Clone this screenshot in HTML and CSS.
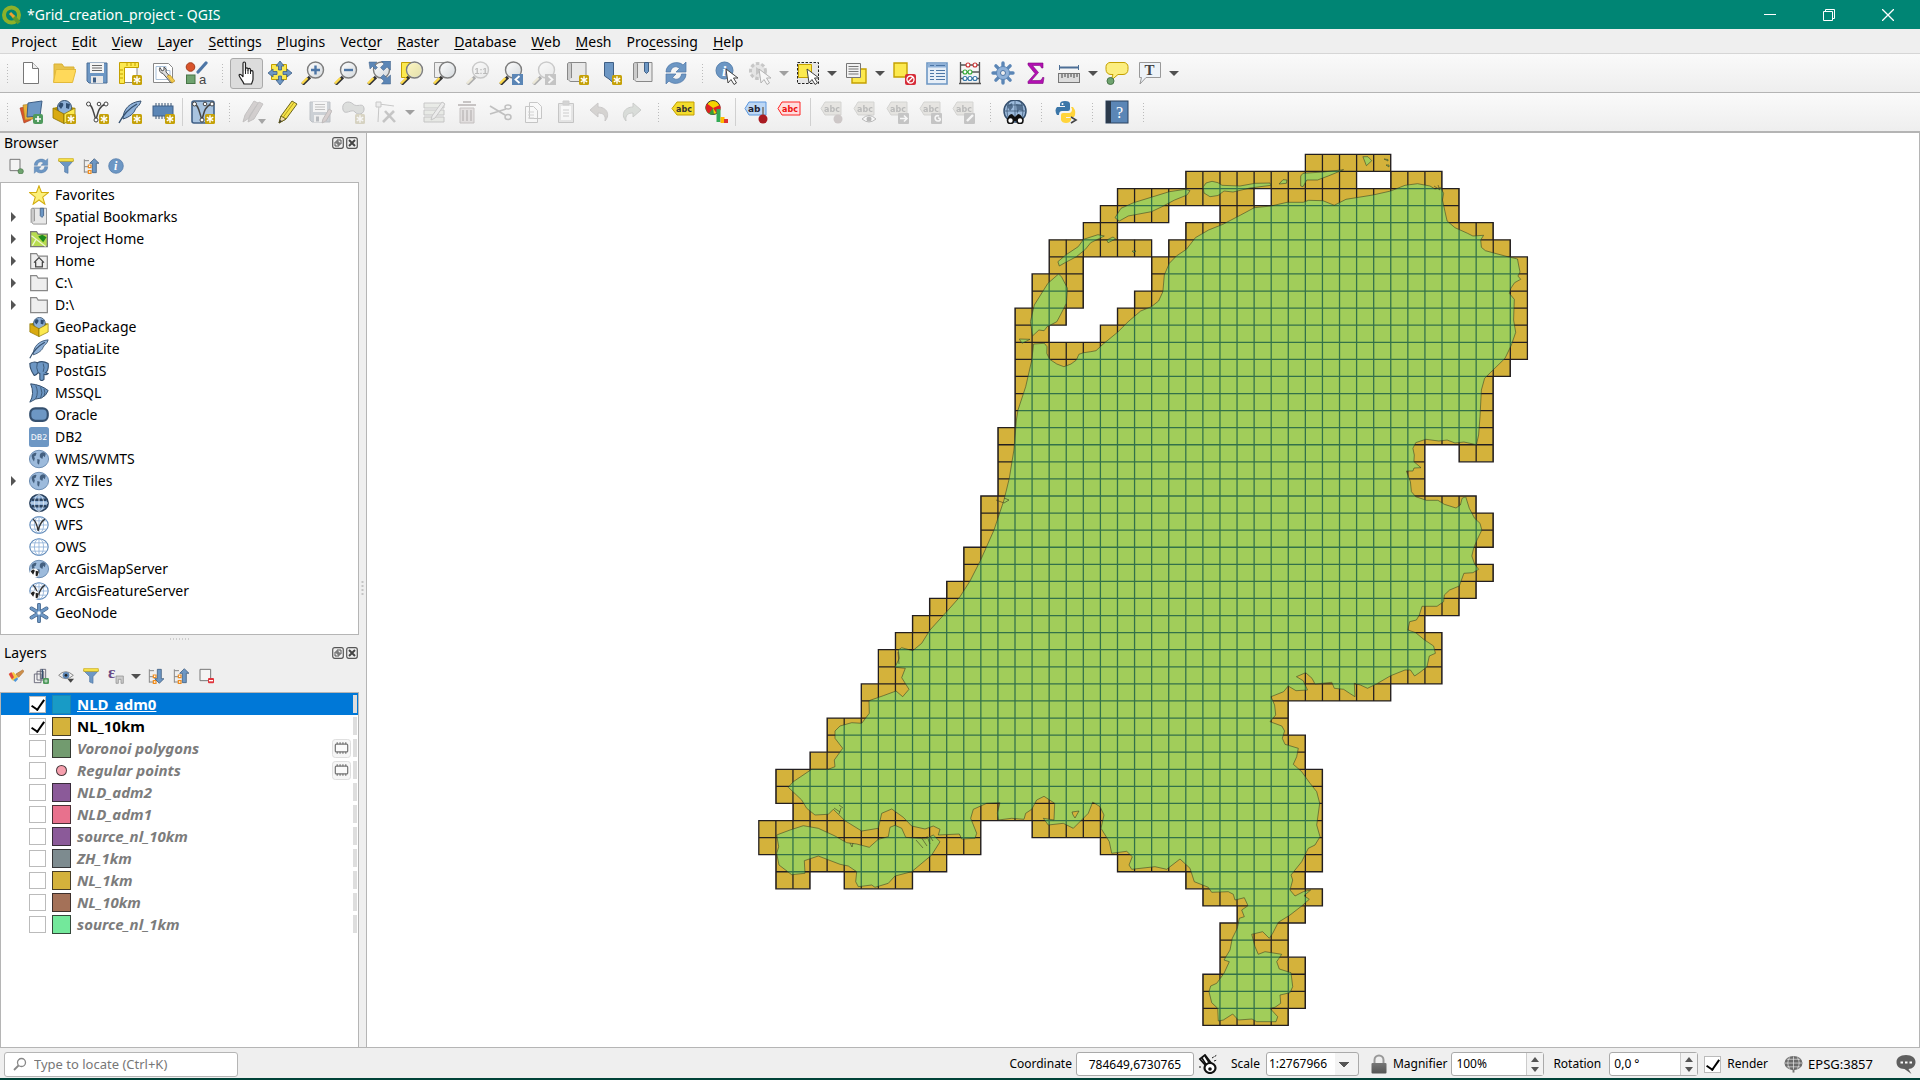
FILE: index.html
```html
<!DOCTYPE html>
<html lang="en">
<head>
<meta charset="utf-8">
<title>*Grid_creation_project - QGIS</title>
<link rel="stylesheet" href="styles.css">
</head>
<body>
<svg class="defs" aria-hidden="true">
  <defs>
    <linearGradient id="g-glass" x1="0" y1="0" x2="1" y2="1"><stop offset="0" stop-color="#fff"/><stop offset="1" stop-color="#d3d8dc"/></linearGradient>
    <linearGradient id="g-lock" x1="0" y1="0" x2="0" y2="1"><stop offset="0" stop-color="#777"/><stop offset="1" stop-color="#555"/></linearGradient>
    <symbol id="badge" viewBox="0 0 24 24"><rect x="14" y="14" width="10" height="10" rx="1.5" fill="#c5a108"/><path d="M19 15.3v7.4M15.8 17.2l6.4 3.6M22.2 17.2l-6.4 3.6" stroke="#fff" stroke-width="1.4"/></symbol>
    <symbol id="lens" viewBox="0 0 24 24"><path d="M1.500 23.500 9 16" stroke="#333" stroke-width="3.200"/><path d="M1 22.500 6.500 17" stroke="#fcd94b" stroke-width="2.400"/><circle cx="14.500" cy="9" r="8" fill="url(#g-glass)" stroke="#7d7d7d" stroke-width="1.400"/></symbol>
    <symbol id="i-new" viewBox="0 0 24 24"><path d="M4.500 1.500h9l6 6v15h-15z" fill="#fff" stroke="#777"/><path d="M13.500 1.500v6h6" fill="#eee" stroke="#777"/></symbol>
    <symbol id="i-open" viewBox="0 0 24 24"><path d="M2 21V3h8l2 3h10v4" fill="#e8c34a" stroke="#d9b032"/><path d="M1.500 21.500 4 8.500h20l-3.500 13z" fill="#ffd95a" stroke="#e2b93a"/></symbol>
    <symbol id="i-save" viewBox="0 0 24 24"><path d="M2 2h20v20H4l-2-2z" fill="#6d97c4" stroke="#4d6f96"/><rect x="5" y="2" width="14" height="10" fill="#f4f4f4"/><path d="M7 4.500h10M7 7h10M7 9.500h10" stroke="#666"/><rect x="6" y="15" width="12" height="7" fill="#e8e8e8"/><rect x="8" y="16.500" width="3" height="5" fill="#3f5f85"/></symbol>
    <symbol id="i-layout" viewBox="0 0 24 24"><path d="M5 4.500h14v17H5z" fill="#fff" stroke="#888"/><path d="M1.500 1.500h19v5h-14v16h-5z" fill="#fce94f" stroke="#c4a000"/><path d="M9 2v3M13 2v3M17 2v3M2 9h3M2 13h3M2 17h3" stroke="#c4a000"/><use href="#badge"/></symbol>
    <symbol id="i-mgr" viewBox="0 0 24 24"><path d="M2.500 2.500h15l4 4v15h-19z" fill="#fff" stroke="#888"/><path d="M5 5.500h10v4h4v9H5z" fill="none" stroke="#a9c0d8"/><path d="M9 6.500a4 4 0 0 0 3 6L20 22l3-2-8-9a4 4 0 0 0-2-5l0 3-2 1z" fill="#ddd" stroke="#555"/><path d="m16 15 5 7 3-2-5-6z" fill="#f2c94c" stroke="#b48a1c" stroke-width=".6"/></symbol>
    <symbol id="i-style" viewBox="0 0 24 24"><circle cx="6.500" cy="6" r="4.300" fill="#d9542b" stroke="#a33c1c"/><path d="m14 11 8-9" stroke="#4d76a6" stroke-width="3.200" stroke-linecap="round"/><rect x="2.500" y="14" width="8.500" height="8.500" fill="#6fa36f" stroke="#477547"/><text x="15" y="22.500" font-size="13" font-family="Liberation Sans" fill="#444">a</text></symbol>
    <symbol id="i-hand" viewBox="0 0 24 24"><path d="M9 23c-1-3-5-7-5-9 1-1.500 3 0 4 2V2.500c0-2 2.500-2 2.500 0V10 8c.3-1.500 2.300-1.500 2.500 0v2-1.500c.3-1.500 2.300-1.300 2.500 0v2c.5-1.300 2.500-1 2.500.5V18c0 2-1 3-1.500 5z" fill="#fff" stroke="#222" stroke-width="1.200"/><path d="M10.500 9v4M13 9.500V13M15.500 10v3" stroke="#222"/></symbol>
    <symbol id="i-pan" viewBox="0 0 24 24"><path d="M3.500 3.500h15v15h-15z" fill="#fce94f" stroke="#c4a000"/><path d="M12 0l4 5h-2.500v4h-3V5H8zM12 24l4-5h-2.500v-4h-3v4H8zM0 12l5-4v2.500h4v3H5V16zM24 12l-5-4v2.500h-4v3h4V16z" fill="#6d97c4" stroke="#3f5f85" stroke-width=".8"/></symbol>
    <symbol id="i-zin" viewBox="0 0 24 24"><use href="#lens"/><path d="M14.500 4.500v9M10 9h9" stroke="#4d76a6" stroke-width="2.400"/></symbol>
    <symbol id="i-zout" viewBox="0 0 24 24"><use href="#lens"/><path d="M10 9h9" stroke="#4d76a6" stroke-width="2.400"/></symbol>
    <symbol id="i-zfull" viewBox="0 0 24 24"><use href="#lens"/><path d="M2 1h8L7.500 3.500l3 3-2 2-3-3L3 8zM23.500 0h-9L17 3l-3.500 3.500 3 3L20 6l3.500 3zM23.500 23h-9l2.500-3-3.500-3.500 3-3L20 17l3.500-3z" fill="#5b86b6" stroke="#3f5f85" stroke-width=".5"/></symbol>
    <symbol id="i-zsel" viewBox="0 0 24 24"><path d="M1.500 1.500h12v15h-12z" fill="#fce94f" stroke="#c4a000"/><use href="#lens"/><circle cx="14.500" cy="9" r="7" fill="#fce94f" opacity=".35"/></symbol>
    <symbol id="i-zlay" viewBox="0 0 24 24"><path d="M1.500 1.500h12v15h-12z" fill="#eee" stroke="#999"/><use href="#lens"/></symbol>
    <symbol id="i-znat" viewBox="0 0 24 24"><use href="#lens"/><text x="8.500" y="12.500" font-size="9" font-weight="bold" font-family="Liberation Sans" fill="#555">1:1</text></symbol>
    <symbol id="i-zlast" viewBox="0 0 24 24"><use href="#lens"/><rect x="13" y="13" width="11" height="11" fill="#5b86b6"/><path d="m20.500 15-4 3.500 4 3.500" fill="none" stroke="#fff" stroke-width="1.800"/></symbol>
    <symbol id="i-znext" viewBox="0 0 24 24"><use href="#lens"/><rect x="13" y="13" width="11" height="11" fill="#777"/><path d="m16.500 15 4 3.500-4 3.500" fill="none" stroke="#fff" stroke-width="1.800"/></symbol>
    <symbol id="i-map" viewBox="0 0 24 24"><path d="M4.500 1.500H21v19H6c-3 0-3-4 0-4z" fill="#e8e8e8" stroke="#888"/><path d="M2.500 19V3c0-2 4-2 4 0v14" fill="#ccc" stroke="#888"/></symbol>
    <symbol id="i-newmap" viewBox="0 0 24 24"><use href="#i-map"/><use href="#badge"/></symbol>
    <symbol id="i-newbm" viewBox="0 0 24 24"><path d="M6.500 1.500h9V22L11 18l-4.500-3z" fill="#6d97c4" stroke="#3f5f85"/><use href="#badge"/></symbol>
    <symbol id="i-bm" viewBox="0 0 24 24"><use href="#i-map"/><path d="M13.500 1.500h4v9l-2 2-2-2z" fill="#6d97c4" stroke="#3f5f85"/></symbol>
    <symbol id="i-refresh" viewBox="0 0 24 24"><path d="M2 11C2 2 14-1 19 4l3-3v10H12l3.500-3.500C12 4 7 6 6.500 11z" fill="#6d97c4" stroke="#4d76a6" stroke-width=".7"/><path d="M22 13c0 9-12 12-17 7l-3 3V13h10l-3.500 3.500C12 20 17 18 17.500 13z" fill="#6d97c4" stroke="#4d76a6" stroke-width=".7"/></symbol>
    <symbol id="cursor" viewBox="0 0 24 24"><path d="m11 8 2 14 3-3.500 3 5 2.500-1.500-3-5H23z" fill="#fff" stroke="#444"/></symbol>
    <symbol id="i-info" viewBox="0 0 24 24"><circle cx="9.500" cy="9.500" r="8.500" fill="#6d97c4" stroke="#5580ad"/><text x="7" y="15" font-size="15" font-weight="bold" font-style="italic" font-family="Liberation Serif" fill="#fff">i</text><use href="#cursor"/></symbol>
    <symbol id="i-act" viewBox="0 0 24 24"><circle cx="10" cy="10" r="7.500" fill="#ccc" stroke="#777" stroke-width="3" stroke-dasharray="3.500 2"/><path d="m8 6 6 4-6 4z" fill="#777"/><use href="#cursor"/></symbol>
    <symbol id="i-select" viewBox="0 0 24 24"><path d="M1.500 1.500h21v21h-21z" fill="#e6e6e6" stroke="#222" stroke-dasharray="2.500 1.500"/><path d="M2.500 3.500h13v13h-13z" fill="#fce94f" stroke="#c4a000"/><use href="#cursor"/></symbol>
    <symbol id="i-form" viewBox="0 0 24 24"><path d="M8 8h14v14H8z" fill="#fce94f" stroke="#c4a000" stroke-width="1.400"/><path d="M2.500 2.500h14v14h-14z" fill="#f2f2f2" stroke="#777"/><path d="M4.500 5.500h10M4.500 8h10M4.500 10.500h10M4.500 13h10" stroke="#777"/></symbol>
    <symbol id="i-desel" viewBox="0 0 24 24"><path d="M2 2h13v14H2z" fill="#fce94f" stroke="#c4a000" stroke-width="1.400"/><rect x="13" y="13" width="11" height="11" rx="2" fill="#d62b37"/><circle cx="18.500" cy="18.500" r="3.500" fill="none" stroke="#fff" stroke-width="1.300"/><path d="m16 21 5-5" stroke="#fff" stroke-width="1.300"/></symbol>
    <symbol id="i-table" viewBox="0 0 24 24"><path d="M2 2h20v21H2z" fill="#e6eef7" stroke="#6d97c4" stroke-width="1.600"/><path d="M3 4.500h18" stroke="#8fb1d8" stroke-width="4"/><path d="M5 9.500h4M11 9.500h9M5 12.500h4M11 12.500h9M5 15.500h4M11 15.500h9M5 18.500h4M11 18.500h9M5 4.500h4M11 4.500h9" stroke="#4d76a6"/></symbol>
    <symbol id="i-abacus" viewBox="0 0 24 24"><path d="M2.500 1v22M21.500 1v22M1 22.500h22M2 4h20M2 11h20M2 17.500h20" stroke="#555" stroke-width="1.300"/><g stroke-width="1.100" fill="#fff"><g stroke="#c33"><circle cx="10" cy="4" r="2"/><circle cx="17" cy="4" r="2"/></g><g stroke="#3a3"><circle cx="7" cy="11" r="2"/><circle cx="12" cy="11" r="2"/></g><g stroke="#37a"><circle cx="7" cy="17.500" r="2"/><circle cx="12" cy="17.500" r="2"/><circle cx="17" cy="17.500" r="2"/></g></g></symbol>
    <symbol id="i-gear" viewBox="0 0 24 24"><path d="M12 2v20M2 12h20M4.900 4.900l14.200 14.200M19.100 4.900 4.900 19.100" stroke="#5b86b6" stroke-width="3.400" stroke-linecap="round"/><circle cx="12" cy="12" r="6.500" fill="#8fb1d8" stroke="#5b86b6"/><circle cx="12" cy="12" r="2.500" fill="#f0f0f0" stroke="#4d76a6"/></symbol>
    <symbol id="i-sigma" viewBox="0 0 24 24"><path d="M4 2h15v5h-1.500C17 5 16 4.500 14 4.500H8.500l6 7-7 8H15c2 0 3-1 3.500-3H20l-1 6H4v-2l7-8-7-8.500z" fill="#b30fb3" stroke="#7c0a7c" stroke-width=".6"/></symbol>
    <symbol id="i-measure" viewBox="0 0 24 24"><path d="M3 6.500h18" stroke="#4d6f96" stroke-width="2"/><path d="M2.500 4v5M21.500 4v5" stroke="#4d6f96"/><rect x="1.500" y="12.500" width="21" height="9" fill="#ddd" stroke="#777"/><path d="M5 13v4M8 13v3M11 13v4M14 13v3M17 13v4M20 13v3" stroke="#444"/></symbol>
    <symbol id="i-tip" viewBox="0 0 24 24"><path d="M5 1.500h14c2 0 4 2 4 4v3c0 3-2 5-5 5h-5l-7 6 2-6H6c-3 0-5-2-5-5v-3c0-2 2-4 4-4z" fill="#fcee7f" stroke="#c4a000"/><circle cx="5.500" cy="20" r="3.500" fill="#6fa36f" stroke="#477547"/></symbol>
    <symbol id="i-T" viewBox="0 0 24 24"><path d="M1.500 1.500h21v15H8l-6 6.500 1.500-6.500h-2z" fill="#eef3f8" stroke="#999"/><text x="6.500" y="14" font-size="15" font-weight="bold" font-family="Liberation Serif" fill="#444">T</text></symbol>
    <symbol id="i-dsm" viewBox="0 0 24 24"><path d="m1 8 8-2 3 14-7 3z" fill="#d9542b" stroke="#a33c1c" stroke-width=".6"/><path d="m4 5 9-1 1 15-8 1z" fill="#e8b13a" stroke="#a87c1c" stroke-width=".6"/><path d="m9 3 14-2-2 15-13 1z" fill="#6d97c4" stroke="#3f5f85"/><rect x="14" y="14" width="10" height="10" rx="2" fill="#4f9a5d"/><path d="M19 16v6M16 19h6" stroke="#fff" stroke-width="1.600"/></symbol>
    <symbol id="i-gpkg" viewBox="0 0 24 24"><path d="m1 8 11-3 11 3-11 6z" fill="#b39100"/><circle cx="12.500" cy="7.500" r="7" fill="#8fb1d8" stroke="#35506f"/><path d="M8 3c3-1 4 1 3 3L9 9 6.500 6zM14 3l4 1-1 5-3-1z" fill="#2f4d70"/><path d="m1 8 11 6v9.500L1 18z" fill="#d9aa10" stroke="#8a7200" stroke-width=".8"/><path d="m12 14 11-6v10l-11 5.500z" fill="#fce94f" stroke="#8a7200" stroke-width=".8"/></symbol>
    <symbol id="i-newgpkg" viewBox="0 0 24 24"><use href="#i-gpkg"/><use href="#badge"/></symbol>
    <symbol id="vee" viewBox="0 0 24 24"><path d="M4 4c4 2 4 8 7 16 2-8 3-14 10-16" fill="none" stroke="#444" stroke-width="1.500"/><g fill="#fff" stroke="#444"><circle cx="3.500" cy="4" r="2"/><circle cx="11" cy="20" r="2"/><circle cx="14" cy="4" r="1.800"/><circle cx="21" cy="4" r="2"/></g></symbol>
    <symbol id="i-shp" viewBox="0 0 24 24"><use href="#vee"/><use href="#badge"/></symbol>
    <symbol id="i-feather" viewBox="0 0 24 24"><path d="M5 19C5 9 12 2 23 1c-1 5-5 6-6 9s-5 7-12 9z" fill="#8fb1d8" stroke="#35506f"/><path d="M1 23C4 17 10 9 19 4" fill="none" stroke="#35506f" stroke-width="1.400"/></symbol>
    <symbol id="i-newsl" viewBox="0 0 24 24"><use href="#i-feather"/><use href="#badge"/></symbol>
    <symbol id="i-chip" viewBox="0 0 24 24"><path d="M5 3v16M8 3v16M11 3v16M14 3v16M17 3v16M20 3v16" stroke="#35506f"/><rect x="2" y="6" width="20" height="10" fill="#5b86b6" stroke="#3f5f85"/></symbol>
    <symbol id="i-newmem" viewBox="0 0 24 24"><use href="#i-chip"/><use href="#badge"/></symbol>
    <symbol id="i-virt" viewBox="0 0 24 24"><rect x="1" y="1" width="22" height="22" rx="2" fill="#a9c4e0" stroke="#3f5f85" stroke-width="1.600"/><use href="#vee"/><use href="#badge"/></symbol>
    <symbol id="i-pencil" viewBox="0 0 24 24"><path d="m4 23 2-7L17 1l5 3L11 19z" fill="#f5e14a" stroke="#6b6420"/><path d="m4 23 2-7 5 3z" fill="#f0dcb0" stroke="#6b6420"/><path d="m4 23 1-3 2 1z" fill="#333"/><path d="M8 17.500 19 2.500" stroke="#b5a21c"/></symbol>
    <symbol id="i-pencils" viewBox="0 0 24 24"><path d="m1 22 2-7L12 1l4 2-9 15zM6 22l2-7L17 2l4 2-9 15z" fill="#a88" stroke="#766"/><path d="M16 19h8l-4 5z" fill="#222"/></symbol>
    <symbol id="i-saveed" viewBox="0 0 24 24"><use href="#i-save"/><path d="m14 23 1-4 6-10 3 2-6 10z" fill="#c88" stroke="#755"/></symbol>
    <symbol id="i-addpoly" viewBox="0 0 24 24"><path d="M2 10C0 2 8 0 12 4s10-2 11 4-6 8-9 4-10 4-12-2z" fill="#aab8aa" stroke="#667"/><use href="#badge"/></symbol>
    <symbol id="i-vertex" viewBox="0 0 24 24"><path d="M4 22 5 4 20 6" fill="none" stroke="#777"/><path d="M2 2h5v5H2z" fill="#ddd" stroke="#777"/><path d="m9 22 11-11M11 11l10 11" stroke="#777" stroke-width="2.600"/></symbol>
    <symbol id="i-attr" viewBox="0 0 24 24"><path d="M2 3h20v5H2zM2 10h20v5H2zM2 17h20v5H2z" fill="#cdb" stroke="#777"/><path d="m9 20 1-4L20 2l3 2-10 14z" fill="#ddd" stroke="#777"/></symbol>
    <symbol id="i-trash" viewBox="0 0 24 24"><path d="M5 8h14v15H5z" fill="#d5b9b9" stroke="#866"/><path d="M3 5h18M8 2h8M8 10v11M12 10v11M16 10v11" stroke="#866" stroke-width="1.800"/></symbol>
    <symbol id="i-cut" viewBox="0 0 24 24"><path d="m2 6 15 9M2 14l16-5" stroke="#666" stroke-width="1.800"/><ellipse cx="20" cy="7" rx="3" ry="2" fill="none" stroke="#666" stroke-width="1.500"/><ellipse cx="20" cy="17" rx="3" ry="2.500" fill="none" stroke="#666" stroke-width="1.500"/></symbol>
    <symbol id="i-copy" viewBox="0 0 24 24"><path d="M8.500 2.500h8l4 4v12h-12zM4.500 6.500h8l4 4v12h-12z" fill="#fff" stroke="#777"/><path d="M7 12h6M7 15h6M7 18h6" stroke="#999"/></symbol>
    <symbol id="i-paste" viewBox="0 0 24 24"><path d="M4.500 3.500h15v19h-15z" fill="#ccc" stroke="#777"/><path d="M7 6h10v14H7z" fill="#fff"/><path d="M9 1h6v4H9zM9 10h6M9 13h6M9 16h6" stroke="#888" fill="#999"/></symbol>
    <symbol id="i-undo" viewBox="0 0 24 24"><path d="M3 10 11 3v4c8 0 13 7 7 14 1-6-2-8-7-8v4z" fill="#a98" stroke="#877"/></symbol>
    <symbol id="i-redo" viewBox="0 0 24 24"><path d="m21 10-8-7v4C5 7 0 14 6 21c-1-6 2-8 7-8v4z" fill="#9b9" stroke="#787"/></symbol>
    <symbol id="i-abc" viewBox="0 0 24 24"><path d="M1 8.500 6 2h17v13H6z" fill="#f3dc2c" stroke="#c4a000"/><text x="5" y="12" font-size="8" font-weight="bold" font-family="DejaVu Sans" fill="#333">abc</text></symbol>
    <symbol id="i-diag" viewBox="0 0 24 24"><circle cx="9" cy="7.500" r="7" fill="#f5d400" stroke="#333"/><path d="M9 8 16 5a7.500 7.500 0 0 1-3 9z" fill="#d22"/><path d="M2 5 9 8l1 6.500A7 7 0 0 1 2 5z" fill="#3a9a3a"/><path d="M3 3.500 9 8 5 13.500A7 7 0 0 1 3 3.500z" fill="#d22"/><path d="M12.500 22V9h4v13z" fill="#3a5"/><path d="M16.500 23v-6h4v6z" fill="#fb0"/><path d="M20 23v-4h4v4z" fill="#d33"/></symbol>
    <symbol id="i-lpin" viewBox="0 0 24 24"><path d="M1 8.500 5 2h17v13H5z" fill="#bcd7f5" stroke="#5b96dd"/><text x="4" y="12" font-size="9" font-weight="bold" font-family="DejaVu Sans" fill="#223">ab</text><path d="M19 7v9" stroke="#888" stroke-width="2"/><circle cx="19" cy="19" r="4.500" fill="#a91b22"/></symbol>
    <symbol id="i-lred" viewBox="0 0 24 24"><path d="M1 8.500 5 2h18v13H5z" fill="#fdd" stroke="#f22"/><text x="5" y="12" font-size="8" font-weight="bold" font-family="DejaVu Sans" fill="#e11">abc</text></symbol>
    <symbol id="lgrey" viewBox="0 0 24 24"><path d="M1 8.500 5 2h16v13H5z" fill="#cfc8a8" stroke="#998"/><text x="4" y="12" font-size="8" font-weight="bold" font-family="DejaVu Sans" fill="#555">abc</text></symbol>
    <symbol id="i-l1" viewBox="0 0 24 24"><use href="#lgrey"/><circle cx="18" cy="19" r="4.500" fill="#a77"/></symbol>
    <symbol id="i-l2" viewBox="0 0 24 24"><use href="#lgrey"/><path d="M9 19q7-7 14 0-7 6-14 0z" fill="#fff" stroke="#555"/><circle cx="16" cy="19" r="2.500" fill="#555"/></symbol>
    <symbol id="i-l3" viewBox="0 0 24 24"><use href="#lgrey"/><rect x="12" y="13" width="11" height="11" rx="1" fill="#777"/><path d="M14 18.500h7m-3-3 3 3-3 3" fill="none" stroke="#fff" stroke-width="1.600"/></symbol>
    <symbol id="i-l4" viewBox="0 0 24 24"><use href="#lgrey"/><rect x="12" y="13" width="11" height="11" rx="1" fill="#777"/><path d="M20 16c-5-2-5 5-1 5 3 0 3-3 0-3" fill="none" stroke="#fff" stroke-width="1.600"/></symbol>
    <symbol id="i-l5" viewBox="0 0 24 24"><use href="#lgrey"/><rect x="12" y="13" width="11" height="11" rx="1" fill="#777"/><path d="m15 21 6-6" stroke="#fff" stroke-width="2.400"/></symbol>
    <symbol id="i-globe" viewBox="0 0 24 24"><ellipse cx="12" cy="12" rx="11.500" ry="10.500" fill="#9dbbdc" stroke="#5b7fa8"/><path d="M3 8c2-3 4-4 6-3l-1 3-2 1 1 2-1 4-2-3zM10 12l3 1-1 6-2-2zM14 5c3-2 5-1 6 1l-1 4-2-2-1 4-3-2 0-3z" fill="#35506f" opacity=".85"/></symbol>
    <symbol id="i-meta" viewBox="0 0 24 24"><circle cx="12" cy="11" r="11" fill="#9dbbdc" stroke="#35506f" stroke-width="1.500"/><path d="M4 6l5-3 1 4-3 4zM13 4l6 1 1 6-4-1-2 4z" fill="#35506f" opacity=".7"/><path d="M2 11h20M4 5h16M12 0v22M6 2q-4 9 0 18M18 2q4 9 0 18" fill="none" stroke="#35506f" stroke-width=".7"/><path d="M4 21q1-7 5-7l3 3 3-3q4 0 5 7" fill="#111"/><circle cx="7.500" cy="20.500" r="3" fill="#fff" stroke="#111" stroke-width="1.600"/><circle cx="17" cy="20.500" r="3" fill="#fff" stroke="#111" stroke-width="1.600"/></symbol>
    <symbol id="i-py" viewBox="0 0 24 24"><path d="M6 6V4q0-3 5-3t5 3v5q0 2-2 2H8q-3 0-3 4H3q-3-5 0-8h8V6z" fill="#3b76a8"/><path d="M17 7h2q4 5 1 10h-8v1h5v2q-1 3-5 3t-5-3v-5q0-2 2-2h6q3 0 3-4z" fill="#ffd43b"/><circle cx="8.500" cy="4" r="1" fill="#fff"/><path d="m17 17 5 3-5 3" fill="none" stroke="#444" stroke-width="1.600"/></symbol>
    <symbol id="i-help" viewBox="0 0 24 24"><rect x="1" y="1" width="22" height="22" fill="#5b86b6" stroke="#2b4360"/><rect x="1" y="1" width="5" height="22" fill="#2b3a4c"/><text x="11" y="18" font-size="16" font-family="Liberation Serif" fill="#fff">?</text></symbol>
    <symbol id="i-star" viewBox="0 0 24 24"><path d="m12 1 3 8h8.500l-7 5.500 2.500 8.500-7-5-7 5 2.500-8.500-7-5.500H9z" fill="#fcf07a" stroke="#d3ad10" stroke-width="1.300"/></symbol>
    <symbol id="i-folder" viewBox="0 0 24 24"><path d="M2 21V3h7l2 3h11v15z" fill="#eee" stroke="#888" stroke-width="1.500"/></symbol>
    <symbol id="i-phome" viewBox="0 0 24 24"><path d="M2 21V3h7l2 3h11v15z" fill="#b8dc50" stroke="#777" stroke-width="1.500"/><path d="m3 8 17 13M8 13l-4 7" stroke="#eef6cc" stroke-width="1.500"/><path d="m11 9 5-2 5 3-4 6z" fill="#1d8a1d"/></symbol>
    <symbol id="i-home" viewBox="0 0 24 24"><use href="#i-folder"/><path d="m6 14 6-6 6 6M8 13v6h8v-6" fill="none" stroke="#444" stroke-width="1.500"/></symbol>
    <symbol id="i-pg" viewBox="0 0 24 24"><path d="M1 3q5-3 9-1 6-3 13 1 1 8-3 11l3 1q-2 2-5 1v6q-3 3-5 0v-7l-2-1q-3 4-5 3Q1 10 1 3z" fill="#6d97c4" stroke="#35506f" stroke-width="1.300"/><path d="M10 2q-2 6 1 12M17 3q2 5 0 10" fill="none" stroke="#35506f"/></symbol>
    <symbol id="i-ms" viewBox="0 0 24 24"><path d="M2 1q12 1 21 8-2 6-8 9Q8 18 1 23q6-10 1-22z" fill="#6d97c4" stroke="#35506f" stroke-width="1.200"/><path d="M8 3q4 8 0 16M14 5q3 7 0 13M18 7q2 4 0 9" fill="none" stroke="#35506f"/></symbol>
    <symbol id="i-ora" viewBox="0 0 24 24"><rect x="1.500" y="4" width="21" height="15" rx="6" fill="#6d97c4" stroke="#35506f" stroke-width="2.600"/></symbol>
    <symbol id="i-db2" viewBox="0 0 24 24"><rect width="24" height="24" rx="3" fill="#6d97c4"/><text x="2" y="15" font-size="9.500" font-family="DejaVu Sans" fill="#fff">DB2</text></symbol>
    <symbol id="i-wcs" viewBox="0 0 24 24"><ellipse cx="12" cy="12" rx="11" ry="10" fill="#8fb1d8" stroke="#2b4360" stroke-width="2"/><path d="M3 8h18M3 16h18" stroke="#2b4360" stroke-width="3"/><path d="M12 2v20M1 12h22" stroke="#dbe7f3"/><ellipse cx="12" cy="12" rx="5.500" ry="10" fill="none" stroke="#dbe7f3"/></symbol>
    <symbol id="i-ows" viewBox="0 0 24 24"><ellipse cx="12" cy="12" rx="11" ry="10" fill="#fff" stroke="#5b86b6" stroke-width="1.300"/><path d="M3 7h18M3 17h18M12 2v20M1 12h22" stroke="#8fb1d8"/><ellipse cx="12" cy="12" rx="5.500" ry="10" fill="none" stroke="#8fb1d8"/></symbol>
    <symbol id="i-wfs" viewBox="0 0 24 24"><use href="#i-ows"/><path d="M5 5q4 3 6 14 2-10 8-14" fill="none" stroke="#333" stroke-width="1.600"/></symbol>
    <symbol id="i-ams" viewBox="0 0 24 24"><use href="#i-globe"/><circle cx="6.500" cy="17" r="5.500" fill="#fff"/><path d="M2 15q3-4 5-1l-2 5zM8 14l4 1-2 6-2-1z" fill="#222"/></symbol>
    <symbol id="i-afs" viewBox="0 0 24 24"><use href="#i-wfs"/><circle cx="6.500" cy="17" r="5.500" fill="#fff"/><path d="M2 15q3-4 5-1l-2 5zM8 14l4 1-2 6-2-1z" fill="#222"/></symbol>
    <symbol id="i-node" viewBox="0 0 24 24"><path d="M12 2v20M3 6.500l18 11M21 6.500l-18 11" stroke="#3f5f85" stroke-width="4.600" stroke-linecap="round"/><path d="M12 2v20M3 6.500l18 11M21 6.500l-18 11" stroke="#6d97c4" stroke-width="3" stroke-linecap="round"/><circle cx="12" cy="12" r="2" fill="#fff"/></symbol>
    <symbol id="i-addl" viewBox="0 0 24 24"><path d="M3 2h15v17H3z" fill="#f4f4f4" stroke="#777" stroke-width="1.500"/><circle cx="19" cy="20" r="4" fill="#6fa36f" stroke="#477547"/></symbol>
    <symbol id="i-filter" viewBox="0 0 24 24"><path d="M1 4h22l-8 9v10l-5-2v-8z" fill="#6d97c4" stroke="#4d76a6"/><path d="M1 1h22v4H1z" fill="#fce94f" stroke="#c4a000"/></symbol>
    <symbol id="tree" viewBox="0 0 24 24"><path d="M2 2v20M2 4h7M2 13h7M2 21h7" stroke="#888" stroke-width="1.500"/><path d="M8 10.500h4v4H8zM8 19h4v4H8z" fill="#fff" stroke="#f08c1c" stroke-width="1.800"/></symbol>
    <symbol id="i-up" viewBox="0 0 24 24"><use href="#tree"/><path d="m17 1 7 7h-4v14h-6V8h-4z" fill="#6d97c4" stroke="#2f4d70"/></symbol>
    <symbol id="i-down" viewBox="0 0 24 24"><use href="#tree"/><path d="m17 23 7-7h-4V2h-6v14h-4z" fill="#6d97c4" stroke="#2f4d70"/></symbol>
    <symbol id="i-prop" viewBox="0 0 24 24"><circle cx="12" cy="12" r="11" fill="#6d97c4" stroke="#4d76a6"/><text x="9" y="18" font-size="18" font-weight="bold" font-style="italic" font-family="Liberation Serif" fill="#fff">i</text></symbol>
    <symbol id="i-brush" viewBox="0 0 24 24"><path d="m2 10 6-4 7 7-5 6q-6 0-8-9z" fill="#f6c945"/><path d="m1 9 4-3 4 8-3 3z" fill="#e2463f"/><path d="m8 18 6-4 1 3-4 4z" fill="#4d96dd"/><path d="m12 9 4 5 8-9-2-2z" fill="#cf8f4a" stroke="#a86d2c"/></symbol>
    <symbol id="i-group" viewBox="0 0 24 24"><path d="M2 9h10v13H2zM6 5h10v13H6zM11 2h8v14h-8z" fill="#f0f0f0" stroke="#667" stroke-width="1.400"/><path d="M14 2v14" stroke="#35506f" stroke-width="2"/><rect x="15" y="15" width="9" height="9" rx="2" fill="#4f9a5d"/><path d="M19.500 17v5M17 19.500h5" stroke="#fff"/></symbol>
    <symbol id="i-eye" viewBox="0 0 24 24"><path d="M1 11q10-11 22 0-11 10-22 0z" fill="#eee" stroke="#888" stroke-width="1.500"/><circle cx="12" cy="11" r="5" fill="#5b86b6"/><circle cx="12" cy="11" r="2" fill="#222"/><path d="M14 16h10l-5 6z" fill="#444"/></symbol>
    <symbol id="i-eps" viewBox="0 0 24 24"><text x="0" y="15" font-size="26" font-weight="bold" font-family="Liberation Serif" fill="#6a4c86">ε</text><path d="M12 12h11v11h-3.500v-6h-4v6H12z" fill="#ccc" stroke="#888"/></symbol>
    <symbol id="i-reml" viewBox="0 0 24 24"><path d="M3 2h16v17H3z" fill="#f4f4f4" stroke="#777" stroke-width="1.500"/><rect x="15" y="15" width="9" height="8" rx="1.500" fill="#e0343c"/><path d="M16.500 19h6" stroke="#fff" stroke-width="2"/></symbol>
    <symbol id="i-float" viewBox="0 0 12 12"><rect x=".7" y=".7" width="10.600" height="10.600" rx="2" fill="none" stroke="#555" stroke-width="1.200"/><path d="M5 3h4v4H5zM3 5h4v4H3z" fill="#efefef" stroke="#555"/></symbol>
    <symbol id="i-close" viewBox="0 0 12 12"><rect x=".7" y=".7" width="10.600" height="10.600" rx="2" fill="none" stroke="#555" stroke-width="1.200"/><path d="m3 3 6 6M9 3 3 9" stroke="#444" stroke-width="2"/></symbol>
    <symbol id="i-mem" viewBox="0 0 20 20"><rect x=".5" y=".5" width="19" height="19" rx="3" fill="#f6f6f6" stroke="#dcdcdc"/><path d="M5.500 3.500v12M8.500 3.500v12M11.500 3.500v12M14.500 3.500v12" stroke="#777" stroke-width="1.300"/><rect x="3.500" y="5.500" width="13" height="8" rx="1" fill="#fafafa" stroke="#777" stroke-width="1.300"/></symbol>
  </defs>
</svg>
<div class="app">
  <header class="titlebar">
    <svg class="logo" viewBox="0 0 20 20"><circle cx="9.500" cy="10" r="7.500" fill="none" stroke="#8db12a" stroke-width="4"/><path d="m11 11 6 7" stroke="#5f9a2c" stroke-width="4"/><path d="m8 8 4 4" stroke="#f0a030" stroke-width="3"/></svg>
    <h1 class="title">*Grid_creation_project - QGIS</h1>
    <button class="win" aria-label="Minimize"><svg viewBox="0 0 12 12"><path d="M0 5.500h12" stroke="#fff"/></svg></button>
    <button class="win" aria-label="Restore"><svg viewBox="0 0 12 12"><path d="M.5 2.500h9v9h-9zM2.500 2.500v-2h9v9h-2" fill="none" stroke="#fff"/></svg></button>
    <button class="win" aria-label="Close"><svg viewBox="0 0 12 12"><path d="m0 0 12 12M12 0 0 12" stroke="#fff" stroke-width="1.300"/></svg></button>
  </header>
  <nav class="menubar">
    <button>Pro<u>j</u>ect</button><button><u>E</u>dit</button><button><u>V</u>iew</button><button><u>L</u>ayer</button><button><u>S</u>ettings</button><button><u>P</u>lugins</button><button>Vect<u>o</u>r</button><button><u>R</u>aster</button><button><u>D</u>atabase</button><button><u>W</u>eb</button><button><u>M</u>esh</button><button>Pro<u>c</u>essing</button><button><u>H</u>elp</button>
  </nav>
  <div class="toolbar" role="toolbar" aria-label="Project and navigation">
    <i class="handle"></i>
    <button class="tool" aria-label="New"><svg><use href="#i-new"/></svg></button>
    <button class="tool" aria-label="Open"><svg><use href="#i-open"/></svg></button>
    <button class="tool" aria-label="Save"><svg><use href="#i-save"/></svg></button>
    <button class="tool" aria-label="New layout"><svg><use href="#i-layout"/></svg></button>
    <button class="tool" aria-label="Layout manager"><svg><use href="#i-mgr"/></svg></button>
    <button class="tool" aria-label="Style manager"><svg><use href="#i-style"/></svg></button>
    <i class="handle"></i>
    <button class="tool active" aria-label="Pan"><svg><use href="#i-hand"/></svg></button>
    <button class="tool" aria-label="Pan to selection"><svg><use href="#i-pan"/></svg></button>
    <button class="tool" aria-label="Zoom in"><svg><use href="#i-zin"/></svg></button>
    <button class="tool" aria-label="Zoom out"><svg><use href="#i-zout"/></svg></button>
    <button class="tool" aria-label="Zoom full"><svg><use href="#i-zfull"/></svg></button>
    <button class="tool" aria-label="Zoom to selection"><svg><use href="#i-zsel"/></svg></button>
    <button class="tool" aria-label="Zoom to layer"><svg><use href="#i-zlay"/></svg></button>
    <button class="tool" disabled aria-label="Native resolution"><svg><use href="#i-znat"/></svg></button>
    <button class="tool" aria-label="Zoom last"><svg><use href="#i-zlast"/></svg></button>
    <button class="tool" disabled aria-label="Zoom next"><svg><use href="#i-znext"/></svg></button>
    <button class="tool" aria-label="New map view"><svg><use href="#i-newmap"/></svg></button>
    <button class="tool" aria-label="New bookmark"><svg><use href="#i-newbm"/></svg></button>
    <button class="tool" aria-label="Bookmarks"><svg><use href="#i-bm"/></svg></button>
    <button class="tool" aria-label="Refresh"><svg><use href="#i-refresh"/></svg></button>
    <i class="handle"></i>
    <button class="tool" aria-label="Identify"><svg><use href="#i-info"/></svg></button>
    <button class="tool" disabled aria-label="Action"><svg><use href="#i-act"/></svg></button>
    <button class="drop" disabled aria-label="Actions menu"></button>
    <button class="tool" aria-label="Select"><svg><use href="#i-select"/></svg></button>
    <button class="drop" aria-label="Select menu"></button>
    <button class="tool" aria-label="Select by value"><svg><use href="#i-form"/></svg></button>
    <button class="drop" aria-label="Select by value menu"></button>
    <button class="tool" aria-label="Deselect"><svg><use href="#i-desel"/></svg></button>
    <button class="tool" aria-label="Attribute table"><svg><use href="#i-table"/></svg></button>
    <button class="tool" aria-label="Field calculator"><svg><use href="#i-abacus"/></svg></button>
    <button class="tool" aria-label="Processing toolbox"><svg><use href="#i-gear"/></svg></button>
    <button class="tool" aria-label="Statistics"><svg><use href="#i-sigma"/></svg></button>
    <button class="tool" aria-label="Measure"><svg><use href="#i-measure"/></svg></button>
    <button class="drop" aria-label="Measure menu"></button>
    <button class="tool" aria-label="Map tips"><svg><use href="#i-tip"/></svg></button>
    <button class="tool" aria-label="Text annotation"><svg><use href="#i-T"/></svg></button>
    <button class="drop" aria-label="Annotation menu"></button>
  </div>
  <div class="toolbar last" role="toolbar" aria-label="Layers and editing">
    <i class="handle"></i>
    <button class="tool" aria-label="Data source manager"><svg><use href="#i-dsm"/></svg></button>
    <button class="tool" aria-label="New GeoPackage"><svg><use href="#i-newgpkg"/></svg></button>
    <button class="tool" aria-label="New shapefile"><svg><use href="#i-shp"/></svg></button>
    <button class="tool" aria-label="New SpatiaLite"><svg><use href="#i-newsl"/></svg></button>
    <button class="tool" aria-label="New temporary layer"><svg><use href="#i-newmem"/></svg></button>
    <i class="sep"></i>
    <button class="tool" aria-label="New virtual layer"><svg><use href="#i-virt"/></svg></button>
    <i class="handle"></i>
    <button class="tool" disabled aria-label="Current edits"><svg><use href="#i-pencils"/></svg></button>
    <button class="tool" aria-label="Toggle editing"><svg><use href="#i-pencil"/></svg></button>
    <button class="tool" disabled aria-label="Save edits"><svg><use href="#i-saveed"/></svg></button>
    <button class="tool" disabled aria-label="Add polygon"><svg><use href="#i-addpoly"/></svg></button>
    <button class="tool" disabled aria-label="Vertex tool"><svg><use href="#i-vertex"/></svg></button>
    <button class="drop" disabled aria-label="Vertex menu"></button>
    <button class="tool" disabled aria-label="Modify attributes"><svg><use href="#i-attr"/></svg></button>
    <button class="tool" disabled aria-label="Delete selected"><svg><use href="#i-trash"/></svg></button>
    <button class="tool" disabled aria-label="Cut"><svg><use href="#i-cut"/></svg></button>
    <button class="tool" disabled aria-label="Copy"><svg><use href="#i-copy"/></svg></button>
    <button class="tool" disabled aria-label="Paste"><svg><use href="#i-paste"/></svg></button>
    <button class="tool" disabled aria-label="Undo"><svg><use href="#i-undo"/></svg></button>
    <button class="tool" disabled aria-label="Redo"><svg><use href="#i-redo"/></svg></button>
    <i class="handle"></i>
    <button class="tool" aria-label="Labels"><svg><use href="#i-abc"/></svg></button>
    <button class="tool" aria-label="Diagrams"><svg><use href="#i-diag"/></svg></button>
    <i class="sep"></i>
    <button class="tool" aria-label="Pinned labels"><svg><use href="#i-lpin"/></svg></button>
    <button class="tool" aria-label="Unplaced labels"><svg><use href="#i-lred"/></svg></button>
    <i class="sep wide"></i>
    <button class="tool" disabled aria-label="Pin label"><svg><use href="#i-l1"/></svg></button>
    <button class="tool" disabled aria-label="Show label"><svg><use href="#i-l2"/></svg></button>
    <button class="tool" disabled aria-label="Move label"><svg><use href="#i-l3"/></svg></button>
    <button class="tool" disabled aria-label="Rotate label"><svg><use href="#i-l4"/></svg></button>
    <button class="tool" disabled aria-label="Change label"><svg><use href="#i-l5"/></svg></button>
    <i class="handle"></i>
    <button class="tool" aria-label="MetaSearch"><svg><use href="#i-meta"/></svg></button>
    <i class="handle"></i>
    <button class="tool" aria-label="Python console"><svg><use href="#i-py"/></svg></button>
    <i class="handle"></i>
    <button class="tool" aria-label="Help"><svg><use href="#i-help"/></svg></button>
    <i class="handle"></i>
  </div>
  <main class="work">
    <aside class="docks">
      <section class="dock browser">
        <div class="dock-head"><h2>Browser</h2><button aria-label="Float Browser"><svg><use href="#i-float"/></svg></button><button aria-label="Close Browser"><svg><use href="#i-close"/></svg></button></div>
        <div class="dock-tools">
          <button aria-label="Add layer"><svg><use href="#i-addl"/></svg></button><button aria-label="Refresh"><svg><use href="#i-refresh"/></svg></button><button aria-label="Filter"><svg><use href="#i-filter"/></svg></button><button aria-label="Collapse all"><svg><use href="#i-up"/></svg></button><button aria-label="Properties"><svg><use href="#i-prop"/></svg></button>
        </div>
        <ul class="tree">
          <li><svg><use href="#i-star"/></svg>Favorites</li>
          <li class="parent"><svg><use href="#i-bm"/></svg>Spatial Bookmarks</li>
          <li class="parent"><svg><use href="#i-phome"/></svg>Project Home</li>
          <li class="parent"><svg><use href="#i-home"/></svg>Home</li>
          <li class="parent"><svg><use href="#i-folder"/></svg>C:\</li>
          <li class="parent"><svg><use href="#i-folder"/></svg>D:\</li>
          <li><svg><use href="#i-gpkg"/></svg>GeoPackage</li>
          <li><svg><use href="#i-feather"/></svg>SpatiaLite</li>
          <li><svg><use href="#i-pg"/></svg>PostGIS</li>
          <li><svg><use href="#i-ms"/></svg>MSSQL</li>
          <li><svg><use href="#i-ora"/></svg>Oracle</li>
          <li><svg><use href="#i-db2"/></svg>DB2</li>
          <li><svg><use href="#i-globe"/></svg>WMS/WMTS</li>
          <li class="parent"><svg><use href="#i-globe"/></svg>XYZ Tiles</li>
          <li><svg><use href="#i-wcs"/></svg>WCS</li>
          <li><svg><use href="#i-wfs"/></svg>WFS</li>
          <li><svg><use href="#i-ows"/></svg>OWS</li>
          <li><svg><use href="#i-ams"/></svg>ArcGisMapServer</li>
          <li><svg><use href="#i-afs"/></svg>ArcGisFeatureServer</li>
          <li><svg><use href="#i-node"/></svg>GeoNode</li>
        </ul>
      </section>
      <div class="grip-h"></div>
      <section class="dock layers">
        <div class="dock-head"><h2>Layers</h2><button aria-label="Float Layers"><svg><use href="#i-float"/></svg></button><button aria-label="Close Layers"><svg><use href="#i-close"/></svg></button></div>
        <div class="dock-tools">
          <button aria-label="Styling panel"><svg><use href="#i-brush"/></svg></button><button aria-label="Add group"><svg><use href="#i-group"/></svg></button><button aria-label="Map themes"><svg><use href="#i-eye"/></svg></button><button aria-label="Filter legend"><svg><use href="#i-filter"/></svg></button><button aria-label="Filter by expression"><svg><use href="#i-eps"/></svg></button><button class="drop" aria-label="Expression menu"></button><button aria-label="Expand all"><svg><use href="#i-down"/></svg></button><button aria-label="Collapse all"><svg><use href="#i-up"/></svg></button><button aria-label="Remove layer"><svg><use href="#i-reml"/></svg></button>
        </div>
        <ul class="legend">
          <li class="selected"><label><input type="checkbox" checked><span class="sw c-blue"></span><span>NLD_adm0</span></label><i class="bar"></i></li>
          <li class="on"><label><input type="checkbox" checked><span class="sw c-gold"></span><span>NL_10km</span></label><i class="bar"></i></li>
          <li><label><input type="checkbox"><span class="sw c-green"></span><span>Voronoi polygons</span></label><svg><use href="#i-mem"/></svg><i class="bar"></i></li>
          <li><label><input type="checkbox"><span class="sw dot"></span><span>Regular points</span></label><svg><use href="#i-mem"/></svg><i class="bar"></i></li>
          <li><label><input type="checkbox"><span class="sw c-purple"></span><span>NLD_adm2</span></label><i class="bar"></i></li>
          <li><label><input type="checkbox"><span class="sw c-pink"></span><span>NLD_adm1</span></label><i class="bar"></i></li>
          <li><label><input type="checkbox"><span class="sw c-purple"></span><span>source_nl_10km</span></label><i class="bar"></i></li>
          <li><label><input type="checkbox"><span class="sw c-slate"></span><span>ZH_1km</span></label><i class="bar"></i></li>
          <li><label><input type="checkbox"><span class="sw c-gold"></span><span>NL_1km</span></label><i class="bar"></i></li>
          <li><label><input type="checkbox"><span class="sw c-brown"></span><span>NL_10km</span></label><i class="bar"></i></li>
          <li><label><input type="checkbox"><span class="sw c-mint"></span><span>source_nl_1km</span></label><i class="bar"></i></li>
        </ul>
      </section>
    </aside>
    <div class="grip-v"></div>
    <section class="canvas" aria-label="Map canvas">
      <svg viewBox="367 133 1552 914">
        <defs>
          <path id="cells" d="M32 0h5v1h-5zM25 1h10v1H25zM37 1h3v1h-3zM21 2h8v1h-8zM30 2h11v1H30zM20 3h4v1h-4zM27 3h14v1H27zM19 4h2v1h-2zM25 4h18v1H25zM17 5h6v1h-6zM24 5h20v1H24zM17 6h2v1h-2zM23 6h22v1H23zM16 7h3v1h-3zM23 7h22v1H23zM16 8h3v1h-3zM22 8h23v1H22zM15 9h3v1h-3zM21 9h24v1H21zM15 10h2v1h-2zM20 10h25v1H20zM15 11h30v1H15zM15 12h29v1H15zM15 13h28v1H15zM15 14h28v1H15zM15 15h28v1H15zM14 16h29v1H14zM14 17h25v1H14zM41 17h2v1h-2zM14 18h25v1H14zM14 19h25v1H14zM13 20h29v1H13zM13 21h30v1H13zM13 22h30v1H13zM12 23h30v1H12zM12 24h31v1H12zM11 25h31v1H11zM10 26h31v1H10zM9 27h30v1H9zM8 28h32v1H8zM7 29h33v1H7zM7 30h33v1H7zM6 31h31v1H6zM6 32h25v1H6zM4 33h27v1H4zM4 34h28v1H4zM3 35h29v1H3zM1 36h32v1H1zM1 37h32v1H1zM2 38h31v1H2zM0 39h13v1H0zM16 39h17v1H16zM0 40h13v1H0zM20 40h13v1H20zM1 41h10v1H1zM21 41h12v1H21zM1 42h2v1H1zM5 42h4v1H5zM25 42h7v1h-7zM26 43h7v1h-7zM28 44h4v1h-4zM27 45h4v1h-4zM27 46h4v1h-4zM27 47h5v1h-5zM26 48h6v1h-6zM26 49h6v1h-6zM26 50h5v1h-5z"/>
          <clipPath id="cell-clip"><use href="#cells"/></clipPath>
        </defs>
        <g transform="translate(758.800 154.400) scale(17.080)">
          <use href="#cells" class="cell"/>
          <path class="meridian" clip-path="url(#cell-clip)" d="M1 0v51M2 0v51M3 0v51M4 0v51M5 0v51M6 0v51M7 0v51M8 0v51M9 0v51M10 0v51M11 0v51M12 0v51M13 0v51M14 0v51M15 0v51M16 0v51M17 0v51M18 0v51M19 0v51M20 0v51M21 0v51M22 0v51M23 0v51M24 0v51M25 0v51M26 0v51M27 0v51M28 0v51M29 0v51M30 0v51M31 0v51M32 0v51M33 0v51M34 0v51M35 0v51M36 0v51M37 0v51M38 0v51M39 0v51M40 0v51M41 0v51M42 0v51M43 0v51M44 0v51"/>
        </g>
        <path class="land" fill-rule="evenodd" d="M1033.600 344 1044.300 343.300 1047 346.700 1046.800 353.300 1049.600 359.300 1056.800 364 1063.900 366.700 1071 364 1076.400 360 1078.900 354.300 1083.600 352.700 1090.700 351.700 1096 350.700 1103.200 344 1117.500 332.300 1128.200 321.700 1140.700 311 1151.400 306.700 1158.600 301 1162.900 291.700 1164.300 275 1169.300 263.300 1176.400 256 1186.400 249.300 1195.400 237.700 1208.600 230 1222.900 224.300 1240.700 215 1254.300 207.700 1271 206 1287.100 202.300 1303.200 202.300 1308.600 200.300 1322.900 200.700 1334.300 205.300 1346 199.300 1372.900 195 1390.700 191 1405 185.300 1417.500 183.700 1430 186 1435 189 1440.700 187.700 1443.600 193.300 1442.500 200 1445 211.700 1447.100 221 1455 227.700 1467.500 233.300 1472.900 236 1483.600 235.300 1480.700 240 1481.400 247.300 1485.400 250.700 1505 256 1517.500 259 1518.600 265 1520 272 1517.900 276 1520.700 279.300 1514.600 282.700 1511 288 1509.300 293.300 1514.300 299.300 1513.600 320 1515.700 332.300 1511.400 345 1505 358.300 1490.700 372.300 1484.600 378.300 1481.400 390 1480 416.700 1478.600 435 1476.400 444.700 1463.900 442 1455 443 1447.100 440 1438.900 441 1425.700 439.300 1415.700 442.700 1412.900 448.300 1414.300 455 1413.900 461.700 1421 467.700 1414 468 1412.900 471 1406.400 471 1410.400 481.700 1411.400 491.700 1415.700 496.700 1426.400 500.300 1437.900 500.300 1444.300 504.300 1456 508 1460.400 505 1462.100 498.300 1465.700 496.700 1469.300 508.300 1474.600 518.300 1480 523.300 1481.800 530 1477 540 1473.600 548.300 1471.800 556 1474.600 564 1478.600 569.300 1472.900 572.700 1463.900 573.300 1459.300 586 1449.600 590 1444.300 595 1443.600 601.700 1437 606.300 1422 606.300 1419.300 615 1416.400 620 1409.600 621.700 1407.900 630 1415.700 632.700 1424.600 640 1433.600 646 1435.400 653.300 1429.300 656 1427 666.700 1420 672.300 1414.600 676 1410.400 670 1405 670 1390.700 675.700 1376.400 684 1367.500 688.300 1360.400 685 1354.300 683.300 1355 696.700 1349.600 693.300 1343.600 689.300 1334.300 688.300 1331.800 682.300 1325 683 1315 684 1312 678.300 1305.700 672.700 1296.400 676.700 1303.200 680.700 1307.500 690 1296 690.700 1288.200 686 1283.600 691.700 1271 696.700 1274.600 705 1275.700 715 1270 721.700 1281.800 726 1284.600 731 1282.300 738.300 1285 744.300 1298.300 748.300 1296.700 756.700 1293.300 764.300 1301.700 771.700 1310 783.300 1316.700 791.700 1319.700 803.300 1316.700 825 1320 836.700 1315 845 1308.300 848.300 1301.700 861.700 1291 875 1292.700 880 1290 890 1295 896 1303.300 891.700 1310.700 890 1304 895.700 1309.300 899.300 1301.700 906 1290 915 1278.300 922.300 1272.700 933.300 1269.300 938.300 1262.700 931.700 1251.700 934.300 1255 946.700 1258.300 954.300 1265 951.700 1281.700 954.300 1276.700 961.700 1279.300 969 1291 972.700 1292.700 986.700 1290 992.700 1280 995 1280.700 1003.300 1275 1007.300 1270 1008.300 1277.700 1016.700 1276 1021.700 1256.700 1021.700 1252 1019 1238.300 1020 1232.700 1014 1223.300 1020 1218.300 1021 1217.700 1008.300 1211.700 1002.700 1209 991.700 1210.700 986 1216.700 983.300 1224 973.300 1229.300 961.700 1224 960 1230 950 1232.300 938.300 1237.300 928.300 1239.300 918.300 1244.300 916.700 1241.700 910 1248 905.700 1244.300 897.700 1235 900 1233.300 894.300 1228.300 891.700 1211.700 892.300 1208.300 887.300 1194.300 881.700 1190 868.300 1180 859 1166.700 869.300 1155 866.700 1131.700 869.300 1129 865 1132.300 856.700 1126.700 851.300 1111.700 853.300 1109.300 841.700 1101 828.300 1104 815 1100 806.700 1092.700 802 1088.300 813.300 1073.300 828.300 1063.300 823.300 1048.300 825 1043.300 818.300 1054 820 1054.700 803.300 1044 796.300 1036.700 800 1031.700 809.300 1025.700 813.300 1024 819.300 1011.700 818.300 998.300 820 997.300 813 1000 802.700 986.700 803.300 973.300 809.300 970.700 818.300 976.700 833.300 975 838.300 961.700 839 959.300 834 938.300 835 940 829.300 933.300 826 925 829 911.700 826 903.300 817.300 891.700 809 881.700 813.300 878.300 828.300 861.700 831 845 820.700 833.300 809.300 828.300 814.300 815 815 806.700 808.300 801.700 800 788.300 787.300 793.300 781.700 811.700 769.300 828.300 769.300 835 766.700 834.300 760 842.700 748.300 835 738.300 835 731 840 726 851.700 722.700 861.700 723.300 869.300 713.300 869 700.700 883.300 695.700 896 691 902.700 696.700 909 689.300 901.700 677.700 905.300 668.300 895 667.300 899.300 658.300 898.300 650 901.700 647.700 912.700 650.700 921.700 643.300 930 630 946.700 611.700 960 596.700 970 581 980.700 560 994 530 1004 500 1009.300 478.300 1013.900 450 1016.400 420 1018 410 1025.700 386.700 1031.800 360zM1072 812l7-1-4 7-2-3zM1058.600 274l3 3 5.900 11.300-1.100 15-6 11.700-3.600 6.700-9.700 5-3 4-5.200-.7-6.400 6-2.100-14.300 3.900-16.700 13.600-21.700zM1019.300 339l10.700.3-8 4zM1057.900 261.700l7.800-6.700 12.500-8.300 5.400-7.400 14.300-4.600 6.400 1.300-13.600 6.700-5.300 6.600-9 7.400-10.700 5.600-6.400 3.700zM1106.800 240l6.200-3 2.700 2-7.700 3.700zM1115 217.700l6-9.400 12.600-5.600 35.700-11 16.100-2.400 4.600 1.400-3 4.300-12.400 5-12.600 6.700-10.600 5-23.200 4.300-8.900 5zM1203.200 187l2.800-4 6-1.700 6 1.400 4 2.600 18 .7 15-2.700 15-.3 1 2.300-21 2.700-17 4-9-1-6 4.500-8 1.200-6-3.700zM1279 184l4-4.300 4 .3-.6 3.300zM1300.700 176l2.300-2.700 20-1.300 20.600-2.300-15.400 6.300-10.700 4-10.700 0-3.800 6.700-2.300-.7zM1362.900 156.700h5l3.900 4-5.400 5zM1384 159l4 .500 0 1.500zM1386 165h3v2zM1132 251l4 0-2 2zM776.700 835l13.300-5 13.300-4.300 15 2.600 16.700 7.700 11.700 6.700 10 1.300 12.600 3.300 9-8 10-2.600 1.700-9.400 5-2 6.700 3 4 9 11 1 9 .500 7.600-3.800 6.700 6.700-8.300 13.300-20 16.700-16.700 4.300-6.700 7.300-13.300 4-3.300-2.300-13.400 1.700-2.600-5 1-10-8.400-5.700-8.300-1.700-21.700-8.300-14 4.700.7 12.600-13.300 1.400-12.700-9.700-2.300-11.700 2-6.600z"/>
        <path class="creek" d="m916 840 7 8m-2-11 6 9m0-10 3 8m-1-9 4 6M850 843l2 4 1-4M834 808l6 4m-1-7 4 3m-4 6 2-6M996 500l8 3 5-3-5-2M898 652l1 12M1434 186l6 4-2-5"/>
      </svg>
    </section>
  </main>
  <footer class="status">
    <label class="locator"><svg viewBox="0 0 14 14"><circle cx="8.500" cy="5.500" r="4" fill="none" stroke="#888" stroke-width="1.300"/><path d="m1 13 4.500-4.500" stroke="#888" stroke-width="1.800"/></svg><input type="text" placeholder="Type to locate (Ctrl+K)" aria-label="Type to locate"></label>
    <span class="spacer"></span>
    <label for="coord">Coordinate</label><input id="coord" class="field coord" type="text" value="784649,6730765">
    <button class="sicon mouse" aria-label="Toggle extents"><svg viewBox="0 0 20 20"><path d="m2 5 5-4 6 8-4 4z" fill="#fff" stroke="#111" stroke-width="1.800"/><path d="m4 4 5 8M7 2l5 8" stroke="#111" stroke-width="1.500"/><path d="M14 4l5-3M1 13h3M16 7l3-1" stroke="#111" stroke-dasharray="2 1"/><ellipse cx="12" cy="14" rx="5.500" ry="5" fill="#fff" stroke="#111" stroke-width="2.200"/><circle cx="12" cy="15" r="1.800" fill="#111"/></svg></button>
    <label for="scale">Scale</label><select id="scale" class="field scale"><option>1:2767966</option></select>
    <button class="sicon lock" aria-label="Lock scale"><svg viewBox="0 0 16 20"><path d="M3.500 10V6a4.500 4.500 0 0 1 9 0v4" fill="none" stroke="#999" stroke-width="2"/><rect x=".5" y="9" width="15" height="10.500" rx="1" fill="url(#g-lock)"/></svg></button>
    <label for="mag">Magnifier</label><span class="field spin mag"><input id="mag" type="text" value="100%"><span class="arrows"></span></span>
    <label for="rot">Rotation</label><span class="field spin rot"><input id="rot" type="text" value="0,0 °"><span class="arrows"></span></span>
    <label class="render"><input type="checkbox" checked>Render</label>
    <button class="crs"><svg viewBox="0 0 20 18"><ellipse cx="10" cy="8" rx="9.500" ry="7.500" fill="#6a6a6a"/><path d="M1 8h18M3 4h14M3 12h14M10 1v14M6 2q-4 6 0 12M14 2q4 6 0 12" fill="none" stroke="#efefef" stroke-width=".7"/><path d="M10 15v3" stroke="#777" stroke-width="2"/></svg>EPSG:3857</button>
    <button class="sicon msg" aria-label="Messages"><svg viewBox="0 0 20 20"><path d="M10 1c6 0 9.500 3 9.500 7s-3 7-7 7l3 5-7-5C3 15 .5 12 .5 8S4 1 10 1z" fill="#5f5f5f"/><path d="M4.500 7.500h2.500v2H4.500zM9 7.500h2.500v2H9zM13.500 7.500H16v2h-2.500z" fill="#fff"/></svg></button>
  </footer>
</div>
</body>
</html>
```
FILE: styles.css
```css
* { box-sizing: border-box; }
html, body { height: 100%; margin: 0; }
body { background: #efefef; color: #000; font: 14px/20px "Noto Sans", "Open Sans", sans-serif; overflow: hidden; }
button, input, select { font: inherit; color: inherit; margin: 0; }
button { border: 0; padding: 0; background: none; }
h1, h2 { margin: 0; font: inherit; }
ul { list-style: none; margin: 0; padding: 0; }
svg { display: block; }
.defs { position: absolute; width: 0; height: 0; }

.app { display: flex; flex-direction: column; height: 100vh; border-bottom: 2px solid #004238; }

.titlebar { display: flex; align-items: center; flex: none; height: 29px; padding-right: 3px; background: #008574; color: #fff; }
.logo { width: 20px; height: 20px; margin: 0 5px 0 2px; }
.title { flex: 1; }
.win { display: flex; justify-content: center; align-items: center; width: 59px; height: 29px; }
.win svg { width: 12px; height: 12px; }

.menubar { display: flex; flex: none; height: 25px; padding: 1px 0 0 4px; border-bottom: 1px solid #d6d6d6; }
.menubar button { padding: 0 8px 0 7px; }
.menubar u { text-underline-offset: 2px; }

.toolbar { display: flex; align-items: center; flex: none; height: 39px; background: linear-gradient(#fafafa, #eee); border-bottom: 1px solid #b4b4b4; }
.toolbar.last { height: 40px; border-bottom-width: 2px; }
.tool { display: flex; align-items: center; justify-content: center; flex: none; width: 33px; height: 31px; }
.tool svg { width: 24px; height: 24px; }
.tool.active { background: #dcdcdc; border: 1px solid #aaa; border-radius: 3px; }
.tool:disabled svg { opacity: .36; filter: grayscale(.7); }
.drop { display: flex; align-items: center; justify-content: center; flex: none; width: 15px; height: 31px; }
.drop::after { content: ""; border: 5px solid transparent; border-top-color: #505050; border-bottom: 0; }
.drop:disabled::after { border-top-color: #a0a0a0; }
.handle { flex: none; width: 18px; height: 20px; padding: 0 5px 0 9px; background: radial-gradient(circle, #bbb 1px, transparent 1px) 9px 0 / 3px 3px; background-clip: content-box; }
.handle:first-child { width: 14px; padding-left: 5px; }
.sep { flex: none; width: 7px; height: 28px; background: linear-gradient(#d0d0d0, #d0d0d0) center / 1px 100% no-repeat; }
.sep.wide { width: 10px; }

.work { display: flex; flex: 1; min-height: 0; }
.docks { display: flex; flex-direction: column; flex: none; width: 359px; }
.dock-head { display: flex; align-items: center; gap: 2px; height: 20px; padding: 0 1px 0 4px; }
.dock-head h2 { flex: 1; }
.dock-head svg { width: 12px; height: 12px; }
.dock-tools { display: flex; align-items: center; height: 26px; padding-left: 3px; }
.dock-tools button { display: flex; justify-content: center; width: 25px; }
.dock-tools svg { width: 16px; height: 16px; }
.dock-tools .drop { width: 15px; }
.browser { flex: none; }
.tree { height: 453px; margin-top: 3px; padding-top: 1px; background: #fff; border: 1px solid #b5b5b5; }
.tree li { position: relative; display: flex; align-items: center; gap: 6px; height: 22px; padding-left: 28px; }
.tree svg { width: 20px; height: 20px; }
.parent::before { content: ""; position: absolute; left: 10px; border: 5px solid transparent; border-left-color: #555; border-right: 0; }
.grip-h { flex: none; height: 8px; margin: 0 170px; background: radial-gradient(circle, #aaa 1px, transparent 1px) center / 3px 3px; clip-path: inset(2px 0 3px); }
.layers { display: flex; flex-direction: column; flex: 1; min-height: 0; }
.layers .dock-tools { margin-bottom: 3px; }
.legend { flex: 1; background: #fff; border: 1px solid #b5b5b5; border-bottom: 0; font-size: 15px; font-weight: bold; }
.legend li { display: flex; align-items: center; height: 22px; padding: 0 1px 0 28px; color: #7c7c7c; font-style: italic; }
.legend label { display: flex; align-items: center; flex: 1; gap: 6px; }
.legend li > svg { width: 19px; height: 19px; margin-right: 2px; }
.legend .on { color: #000; font-style: normal; }
.legend .selected { background: #0078d7; color: #fff; font-style: normal; text-decoration: underline; }
input[type="checkbox"] { appearance: none; flex: none; width: 17px; height: 17px; background: #fff; border: 1px solid #bbb; }
input[type="checkbox"]:checked::after { content: ""; display: block; width: 6px; height: 11px; margin: 0 0 0 4px; border: solid #000; border-width: 0 2px 2px 0; transform: rotate(35deg); }
.sw { flex: none; width: 19px; height: 19px; border: 1px solid rgba(35, 31, 32, .8); }
.bar { width: 4px; height: 18px; background: #dedede; }
.c-blue { background: #189bc6; border-color: #1c88b2; }
.c-gold { background: #d4b23b; }
.c-green { background: #729b6f; }
.c-purple { background: #8b5a99; }
.c-pink { background: #e8718d; }
.c-slate { background: #7d8b8f; }
.c-brown { background: #a47158; }
.c-mint { background: #73e89b; }
.dot { width: 11px; height: 11px; margin: 0 4px; border-radius: 50%; background: #f6a0ae; }

.grip-v { flex: none; width: 7px; background: radial-gradient(circle, #c4c4c4 1px, transparent 1px) center / 4px 4px; clip-path: inset(448px 1px 450px 2px); }
.canvas { flex: 1; min-width: 0; background: #fff; border-left: 1px solid #b5b5b5; border-right: 1px solid #b5b5b5; }
.canvas svg { width: 100%; height: 100%; }
.cell { fill: #d4b23b; stroke: #231f20; stroke-width: .075; }
.meridian { fill: none; stroke: #231f20; stroke-width: .075; }
.land { fill: rgba(78, 249, 143, .38); stroke: rgba(50, 60, 35, .55); stroke-width: 1; stroke-linejoin: round; }
.creek { fill: none; stroke: rgba(60, 60, 35, .6); stroke-width: 1; }

.status { display: flex; align-items: center; flex: none; height: 31px; padding: 2px 4px 0; border-top: 1px solid #b5b5b5; font-size: 12px; line-height: 18px; }
.locator { display: flex; align-items: center; gap: 7px; width: 234px; height: 25px; padding-left: 8px; background: #fff; border: 1px solid #b5b5b5; border-radius: 3px; font-size: 13px; }
.locator svg { width: 14px; height: 14px; }
.locator input { flex: 1; min-width: 0; border: 0; padding: 0; outline: 0; background: none; }
.locator input::placeholder { color: #777; opacity: 1; }
.spacer { flex: 1; }
.field { height: 24px; margin-left: 4px; background: #fff; border: 1px solid #aaa; border-radius: 3px; }
.coord { width: 118px; margin-left: 4px; padding: 0; text-align: center; }
.scale { appearance: none; width: 93px; margin-left: 6px; padding: 0 2px; background-image: linear-gradient(to top right, transparent 50%, #555 50%), linear-gradient(to top left, transparent 50%, #555 50%), linear-gradient(90deg, #fff 68px, #f3f3f3 68px); background-size: 5px 6px, 5px 6px, 100% 100%; background-position: 72px 9px, 77px 9px, 0 0; background-repeat: no-repeat; }
.spin { display: flex; }
.spin input { flex: 1; min-width: 0; border: 0; padding: 0 4px; background: none; }
.mag { width: 93px; margin: 0 9px 0 4px; }
.rot { width: 89px; margin: 0 6px 0 8px; }
.arrows { display: flex; flex-direction: column; justify-content: center; align-items: center; gap: 5px; width: 17px; background: #f3f3f3; border-left: 1px solid #ccc; }
.arrows::before { content: ""; border: 4px solid transparent; border-bottom: 5px solid #555; border-top: 0; }
.arrows::after { content: ""; border: 4px solid transparent; border-top: 5px solid #555; border-bottom: 0; }
.sicon svg { width: 20px; height: 20px; }
.mouse { margin: 0 13px 0 4px; }
.lock { margin: 0 6px 0 12px; }
.lock svg { width: 16px; }
.render { display: flex; align-items: center; gap: 6px; }
.crs { display: flex; align-items: center; gap: 5px; margin: 0 23px 0 16px; font-size: 13px; }
.crs svg { width: 19px; height: 18px; }
```
